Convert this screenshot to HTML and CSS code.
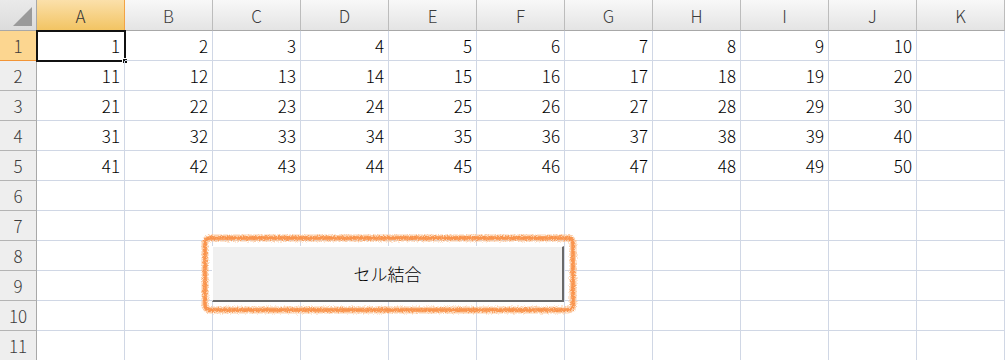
FILE: index.html
```html
<!DOCTYPE html>
<html lang="ja">
<head>
<meta charset="utf-8">
<link rel="stylesheet" href="styles.css">
</head>
<body>
<div class="sheet">
  <div class="grid" id="grid">
    <div class="corner"><span class="tri"></span></div>
    <div class="ch sel">A</div><div class="ch">B</div><div class="ch">C</div><div class="ch">D</div><div class="ch">E</div><div class="ch">F</div><div class="ch">G</div><div class="ch">H</div><div class="ch">I</div><div class="ch">J</div><div class="ch">K</div>

    <div class="rh sel">1</div><div class="c active">1<span class="selbox"><span class="handle"></span></span></div><div class="c">2</div><div class="c">3</div><div class="c">4</div><div class="c">5</div><div class="c">6</div><div class="c">7</div><div class="c">8</div><div class="c">9</div><div class="c">10</div><div class="c"></div>
    <div class="rh">2</div><div class="c">11</div><div class="c">12</div><div class="c">13</div><div class="c">14</div><div class="c">15</div><div class="c">16</div><div class="c">17</div><div class="c">18</div><div class="c">19</div><div class="c">20</div><div class="c"></div>
    <div class="rh">3</div><div class="c">21</div><div class="c">22</div><div class="c">23</div><div class="c">24</div><div class="c">25</div><div class="c">26</div><div class="c">27</div><div class="c">28</div><div class="c">29</div><div class="c">30</div><div class="c"></div>
    <div class="rh">4</div><div class="c">31</div><div class="c">32</div><div class="c">33</div><div class="c">34</div><div class="c">35</div><div class="c">36</div><div class="c">37</div><div class="c">38</div><div class="c">39</div><div class="c">40</div><div class="c"></div>
    <div class="rh">5</div><div class="c">41</div><div class="c">42</div><div class="c">43</div><div class="c">44</div><div class="c">45</div><div class="c">46</div><div class="c">47</div><div class="c">48</div><div class="c">49</div><div class="c">50</div><div class="c"></div>
    <div class="rh">6</div><div class="c"></div><div class="c"></div><div class="c"></div><div class="c"></div><div class="c"></div><div class="c"></div><div class="c"></div><div class="c"></div><div class="c"></div><div class="c"></div><div class="c"></div>
    <div class="rh">7</div><div class="c"></div><div class="c"></div><div class="c"></div><div class="c"></div><div class="c"></div><div class="c"></div><div class="c"></div><div class="c"></div><div class="c"></div><div class="c"></div><div class="c"></div>
    <div class="rh">8</div><div class="c"></div><div class="c"></div><div class="c"></div><div class="c"></div><div class="c"></div><div class="c"></div><div class="c"></div><div class="c"></div><div class="c"></div><div class="c"></div><div class="c"></div>
    <div class="rh">9</div><div class="c"></div><div class="c"></div><div class="c"></div><div class="c"></div><div class="c"></div><div class="c"></div><div class="c"></div><div class="c"></div><div class="c"></div><div class="c"></div><div class="c"></div>
    <div class="rh">10</div><div class="c"></div><div class="c"></div><div class="c"></div><div class="c"></div><div class="c"></div><div class="c"></div><div class="c"></div><div class="c"></div><div class="c"></div><div class="c"></div><div class="c"></div>
    <div class="rh">11</div><div class="c"></div><div class="c"></div><div class="c"></div><div class="c"></div><div class="c"></div><div class="c"></div><div class="c"></div><div class="c"></div><div class="c"></div><div class="c"></div><div class="c"></div>
  </div>

  <svg class="highlight" width="380" height="84" viewBox="0 0 380 84">
    <defs>
      <filter id="rough" x="-5%" y="-10%" width="110%" height="120%">
        <feTurbulence type="fractalNoise" baseFrequency="1.2" numOctaves="2" seed="5" result="n"/>
        <feDisplacementMap in="SourceGraphic" in2="n" scale="4" xChannelSelector="R" yChannelSelector="G"/>
      </filter>
    </defs>
    <rect x="4" y="4" width="368" height="72" rx="5" ry="5" fill="none" stroke="#fcc294" stroke-width="7" opacity="0.8" filter="url(#rough)"/>
    <rect x="4" y="4" width="368" height="72" rx="5" ry="5" fill="none" stroke="#f98e44" stroke-width="3.5" opacity="0.9" filter="url(#rough)"/>
  </svg>
  <button class="btn">セル結合</button>
</div>
</body>
</html>
```

FILE: styles.css
```css
* { box-sizing: border-box; }
html, body { margin: 0; padding: 0; background: #fff; }
body {
  width: 1005px;
  height: 360px;
  overflow: hidden;
  font-family: "Noto Sans CJK JP", "Noto Sans", sans-serif;
  font-weight: 300;
}
.sheet { position: relative; width: 1005px; height: 360px; }
.grid {
  display: grid;
  grid-template-columns: 37px repeat(11, 88px);
  grid-template-rows: 31px repeat(11, 30px);
}
.corner {
  position: relative;
  border-right: 1px solid #a8a8a8;
  border-bottom: 1px solid #a8a8a8;
  background: linear-gradient(#eaeaea, #dcdcdc);
}
.tri {
  position: absolute;
  right: 4px;
  bottom: 4px;
  width: 0; height: 0;
  border-left: 19px solid transparent;
  border-bottom: 19px solid #9a9a9a;
}
.ch {
  display: flex;
  align-items: center;
  justify-content: center;
  font-size: 17px;
  color: #3c3c3c;
  background: linear-gradient(#f8f8f8, #e4e4e4);
  border-right: 1px solid #bcbcbc;
  border-bottom: 1px solid #a8a8a8;
}
.ch.sel {
  background: linear-gradient(#fbe0aa, #f2c463);
  border-right: 1px solid #f2a345;
  border-bottom: 1px solid #f29436;
  color: #333;
}
.rh {
  display: flex;
  align-items: center;
  justify-content: center;
  font-size: 17px;
  color: #3c3c3c;
  background: #eeeeee;
  border-right: 1px solid #a8a8a8;
  border-bottom: 1px solid #b4b4b4;
}
.rh.sel {
  background: #fcd690;
  border-right: 1px solid #f29436;
  border-bottom: 1px solid #f29436;
}
.c {
  position: relative;
  display: flex;
  align-items: center;
  justify-content: flex-end;
  padding-right: 4px;
  font-size: 17px;
  color: #000;
  border-right: 1px solid #d0d7e5;
  border-bottom: 1px solid #d0d7e5;
}
.selbox {
  position: absolute;
  left: -1px;
  top: -1px;
  right: -2px;
  bottom: -2px;
  border: 2px solid #111;
}
.handle {
  position: absolute;
  right: -4px;
  bottom: -4px;
  width: 6px;
  height: 6px;
  background: #111;
  border: 1px solid #fff;
}
.highlight {
  position: absolute;
  left: 201px;
  top: 234px;
}
.btn {
  position: absolute;
  left: 212px;
  top: 246px;
  width: 352px;
  height: 56px;
  margin: 0;
  padding: 0;
  background: #f0f0f0;
  border-top: 1px solid #ffffff;
  border-left: 1px solid #ffffff;
  border-right: 2px solid #696969;
  border-bottom: 2px solid #696969;
  font-family: "Noto Sans CJK JP", sans-serif;
  font-weight: 300;
  font-size: 17px;
  color: #000;
}
```
